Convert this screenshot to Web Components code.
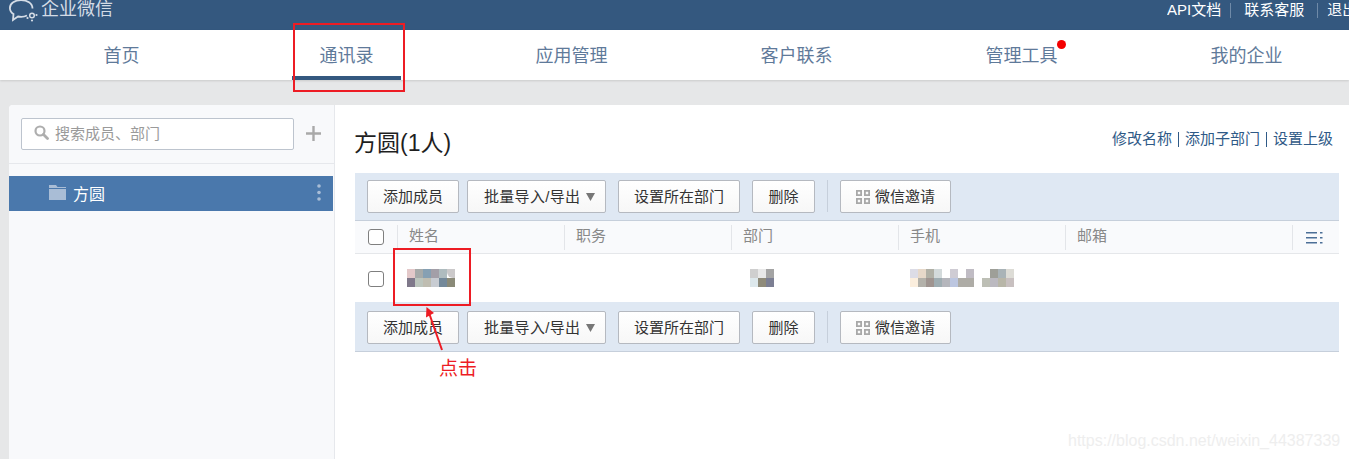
<!DOCTYPE html>
<html lang="zh">
<head>
<meta charset="utf-8">
<title>通讯录</title>
<style>
    html, body { margin: 0; height: 100%; overflow: hidden; }
    body {
        background: #e6e7e8;
        font-family: "Liberation Sans", "Noto Sans CJK SC", sans-serif;
        position: relative;
        width: 1349px;
        height: 459px;
    }
</style>
</head>
<body>
<wx-topbar></wx-topbar>
<wx-nav></wx-nav>
<wx-page>
    <wx-sidebar slot="side"></wx-sidebar>
    <wx-party></wx-party>
</wx-page>
<wx-annotations></wx-annotations>

<script>
    class WxTopbar extends HTMLElement {
        constructor() {
            super();
            this.attachShadow({ mode: 'open' });
            this.shadowRoot.innerHTML = `
                <style>
                    :host {
                        display: flex;
                        align-items: flex-start;
                        justify-content: space-between;
                        height: 30px;
                        background: #34587f;
                        color: #fff;
                        font-size: 15px;
                        line-height: 19px;
                        overflow: hidden;
                    }
                    .logo { display: flex; align-items: flex-start; gap: 3px; padding-left: 9px; color: #d4dce6; font-size: 18px; }
                    .logo svg { display: block; }
                    .links { display: flex; align-items: flex-start; white-space: nowrap; width: 182px; overflow: hidden; }
                    .sep { width: 1px; height: 15px; background: #6f8aa8; margin-top: 3px; flex: none; }
                    .a { margin: 3px 13px 0 9px; }
                    .b { margin: 3px 9px 0 13px; }
                </style>
                <div class="logo">
                    <svg width="29" height="23" viewBox="0 0 29 23" fill="none" stroke="#d4dce6" stroke-width="1.800">
                        <path d="M18 15.500 C15.500 16.800 12.500 17.200 9 16.500 L4 20 L4.500 14 C2 12.500 .9 10 .9 8 C.9 3 6 .2 12 .2 C18 .2 23.500 3 23.500 8.500"/>
                        <circle cx="23" cy="15.500" r="2.300" stroke-width="1.500"/>
                        <circle cx="18.500" cy="18" r="1.100" fill="#d4dce6" stroke="none"/>
                        <circle cx="23" cy="20.500" r="1.100" fill="#d4dce6" stroke="none"/>
                        <circle cx="27.500" cy="15" r="1.100" fill="#d4dce6" stroke="none"/>
                    </svg>
                    <span>企业微信</span>
                </div>
                <div class="links">
                    <span>API文档</span><i class="sep a"></i><span>联系客服</span><i class="sep b"></i><span>退出</span>
                </div>
            `;
        }
    }

    class WxNav extends HTMLElement {
        constructor() {
            super();
            this.attachShadow({ mode: 'open' });
            const items = ['首页', '通讯录', '应用管理', '客户联系', '管理工具', '我的企业'];
            this.shadowRoot.innerHTML = `
                <style>
                    :host {
                        display: grid;
                        grid-template-columns: repeat(6, 225px);
                        height: 50px;
                        background: #fff;
                        box-shadow: 0 1px 2px rgba(0,0,0,.12);
                        position: relative;
                        padding-left: 9px;
                        box-sizing: border-box;
                    }
                    a {
                        display: flex;
                        align-items: center;
                        justify-content: center;
                        height: 50px;
                        box-sizing: border-box;
                        padding-bottom: 2px;
                        font-size: 18px;
                        color: #5f7a9a;
                        position: relative;
                    }
                    a.on::after {
                        content: '';
                        position: absolute;
                        left: 58px;
                        width: 109px;
                        bottom: 0;
                        height: 4px;
                        background: #34587f;
                    }
                    b { position: absolute; left: 148px; top: 10px; width: 9px; height: 9px; border-radius: 50%; background: #f40000; }
                </style>
                ${items.map((t, i) => `<a class="${i === 1 ? 'on' : ''}">${t}${i === 4 ? '<b></b>' : ''}</a>`).join('')}
            `;
        }
    }

    class WxPage extends HTMLElement {
        constructor() {
            super();
            this.attachShadow({ mode: 'open' });
            this.shadowRoot.innerHTML = `
                <style>
                    :host {
                        display: flex;
                        margin: 25px 0 0 9px;
                        height: 354px;
                        background: #fff;
                        border-radius: 4px 0 0 0;
                        overflow: hidden;
                    }
                </style>
                <slot name="side"></slot>
                <slot></slot>
            `;
        }
    }

    class WxSidebar extends HTMLElement {
        constructor() {
            super();
            this.attachShadow({ mode: 'open' });
            this.shadowRoot.innerHTML = `
                <style>
                    :host {
                        display: block;
                        width: 326px;
                        flex: none;
                        box-sizing: border-box;
                        background: #f8f9fb;
                        border-right: 1px solid #e6e8ec;
                    }
                    .search {
                        display: flex;
                        align-items: flex-start;
                        height: 59px;
                        box-sizing: border-box;
                        padding: 13px 0 0 12px;
                        border-bottom: 1px solid #e6e8ec;
                    }
                    .box {
                        display: flex;
                        align-items: center;
                        gap: 6px;
                        width: 273px;
                        height: 32px;
                        box-sizing: border-box;
                        padding: 0 0 3px 12px;
                        background: #fff;
                        border: 1px solid #bdc4ce;
                        border-radius: 2px;
                        color: #9a9a9a;
                        font-size: 15px;
                    }
                    .box svg { flex: none; }
                    .plus { margin: 8px 0 0 12px; display: block; }
                    .row {
                        display: flex;
                        align-items: center;
                        height: 35px;
                        margin: 12px 1px 0 0;
                        padding-left: 40px;
                        background: #4a78ac;
                        color: #fff;
                        font-size: 16px;
                    }
                    .row span { flex: 1; margin-left: 7px; padding-bottom: 1px; }
                    .row svg { display: block; margin-bottom: 2px; }
                    .dots { margin-right: 12px; }
                </style>
                <div class="search">
                    <div class="box">
                        <svg width="15" height="15" viewBox="0 0 15 15" fill="none">
                            <circle cx="6" cy="6" r="4.500" stroke="#aeaeae" stroke-width="2.200"/>
                            <path d="M9.500 9.500 L13.500 13.500" stroke="#aeaeae" stroke-width="2.800" stroke-linecap="round"/>
                        </svg>
                        <span>搜索成员、部门</span>
                    </div>
                    <svg class="plus" width="15" height="15" viewBox="0 0 15 15">
                        <path d="M6.300 0h2.400v15H6.300zM0 6.300h15v2.400H0z" fill="#a9a9a9"/>
                    </svg>
                </div>
                <div class="row">
                    <svg width="17" height="15" viewBox="0 0 17 15" fill="#a9bdd6">
                        <path d="M0 0h7l1.500 2H17v1H0zM0 4h17v11H0z"/>
                    </svg>
                    <span>方圆</span>
                    <svg class="dots" width="4" height="17" viewBox="0 0 4 17" fill="#a9bdd6">
                        <circle cx="2" cy="2" r="1.800"/><circle cx="2" cy="8.500" r="1.800"/><circle cx="2" cy="15" r="1.800"/>
                    </svg>
                </div>
            `;
        }
    }

    class WxButton extends HTMLElement {
        constructor() {
            super();
            this.attachShadow({ mode: 'open' });
            this.shadowRoot.innerHTML = `
                <style>
                    :host {
                        display: inline-flex;
                        align-items: center;
                        justify-content: center;
                        gap: 5px;
                        height: 33px;
                        box-sizing: border-box;
                        padding-bottom: 2px;
                        border: 1px solid #b5b9c0;
                        border-radius: 2px;
                        background: linear-gradient(#fff, #f7f7f7);
                        color: #333;
                        font-size: 15px;
                        white-space: nowrap;
                    }
                </style>
                <slot></slot>
            `;
        }
    }

    class WxToolbar extends HTMLElement {
        constructor() {
            super();
            this.attachShadow({ mode: 'open' });
            const h = this.getAttribute('h');
            const pad = this.getAttribute('pad');
            this.shadowRoot.innerHTML = `
                <style>
                    :host {
                        display: flex;
                        align-items: flex-start;
                        height: ${h}px;
                        box-sizing: border-box;
                        padding: ${pad}px 0 0 12px;
                        background: #dfe8f3;
                        border-bottom: 1px solid #c6cfdb;
                    }
                    wx-button { flex: none; }
                    .div { width: 1px; height: 32px; background: #c6cfdb; margin: 0 12px; }
                    svg { display: block; }
                    .batch { justify-content: flex-start; padding-left: 16px; letter-spacing: .3px; gap: 6px; }
                    .batch svg { margin-top: 2px; }
                </style>
                <wx-button style="width:92px">添加成员</wx-button>
                <wx-button class="batch" style="width:139px;margin-left:8px">批量导入/导出<svg width="9" height="9" viewBox="0 0 9 9" fill="#777"><path d="M0 1h9L4.500 9z"/></svg></wx-button>
                <wx-button style="width:122px;margin-left:12px">设置所在部门</wx-button>
                <wx-button style="width:63px;margin-left:12px">删除</wx-button>
                <i class="div"></i>
                <wx-button style="width:111px">
                    <svg width="14" height="14" viewBox="0 0 14 14" fill="#a8a8a8" style="margin-top:2px">
                        <path d="M0 0h6v6H0zM1.800 1.800v2.400h2.400V1.800zM8 0h6v6H8zM9.800 1.800v2.400h2.400V1.800zM0 8h6v6H0zM1.800 9.800v2.400h2.400V9.800zM8 8h6v6H8zM9.800 9.800v2.400h2.400V9.800z" fill-rule="evenodd"/>
                    </svg>
                    微信邀请
                </wx-button>
            `;
        }
    }

    class WxCheckbox extends HTMLElement {
        constructor() {
            super();
            this.attachShadow({ mode: 'open' });
            this.shadowRoot.innerHTML = `
                <style>
                    :host {
                        display: block;
                        width: 16px;
                        height: 16px;
                        box-sizing: border-box;
                        background: #fff;
                        border: 1px solid #7f7f7f;
                        border-radius: 3px;
                    }
                </style>
            `;
        }
    }

    // stands in for the pixelated name / phone in the screenshot
    class WxMosaic extends HTMLElement {
        constructor() {
            super();
            this.attachShadow({ mode: 'open' });
            const colors = this.getAttribute('colors').split(' ');
            const cols = this.getAttribute('cols');
            this.shadowRoot.innerHTML = `
                <style>
                    :host {
                        display: inline-grid;
                        grid-template-columns: repeat(${cols}, 8px);
                        grid-auto-rows: 9px;
                        vertical-align: top;
                    }
                    :host([round]) i:first-child { border-top-left-radius: 6px; }
                    :host([round]) i:nth-child(${Number(cols) + 1}) { border-bottom-left-radius: 6px; }
                </style>
                ${colors.map(c => `<i style="background:${c === '-' ? 'transparent' : '#' + c}"></i>`).join('')}
            `;
        }
    }

    class WxParty extends HTMLElement {
        constructor() {
            super();
            this.attachShadow({ mode: 'open' });
            this.shadowRoot.innerHTML = `
                <style>
                    :host {
                        display: block;
                        flex: 1;
                        min-width: 0;
                        padding: 0 10px 0 20px;
                        background: #fff;
                    }
                    .head {
                        display: flex;
                        justify-content: space-between;
                        align-items: flex-start;
                        height: 68px;
                        box-sizing: border-box;
                        padding-top: 25px;
                    }
                    h1 { margin: 0 0 0 -1px; font-weight: normal; font-size: 23px; line-height: 26px; color: #1f1f1f; }
                    .acts { display: flex; align-items: center; font-size: 15px; line-height: 18px; color: #2f5a87; margin: 0 6px 0 0; }
                    .acts i { width: 1px; height: 15px; background: #2f5a87; margin: 0 6px; }
                    .thead, .tbody {
                        display: grid;
                        grid-template-columns: 42px repeat(4, 167px) 227px 47px;
                        align-items: center;
                    }
                    .thead {
                        height: 32px;
                        background: #f9fafc;
                        border-bottom: 1px solid #e5e7ea;
                        color: #888;
                        font-size: 15px;
                    }
                    .thead > div { height: 25px; line-height: 22px; padding-left: 11px; box-sizing: border-box; border-left: 1px solid #e3e5e9; }
                    .thead > .c0, .tbody > .c0 { height: auto; border: 0; padding: 0 0 0 13px; display: flex; align-items: center; }
                    .thead > .menu { padding: 7px 0 0 13px; }
                    .tbody { height: 48px; color: #333; font-size: 14px; }
                    .tbody > div { display: flex; }
                    .tbody > .c0 { padding-top: 2px; }
                </style>
                <div class="head">
                    <h1>方圆(1人)</h1>
                    <div class="acts"><span>修改名称</span><i></i><span>添加子部门</span><i></i><span>设置上级</span></div>
                </div>
                <wx-toolbar h="48" pad="7"></wx-toolbar>
                <div class="thead">
                    <div class="c0"><wx-checkbox></wx-checkbox></div>
                    <div>姓名</div><div>职务</div><div>部门</div><div>手机</div><div>邮箱</div>
                    <div class="menu">
                        <svg width="17" height="12" viewBox="0 0 17 12" fill="#4c6f97" style="display:block">
                            <path d="M0 0h11v1.500H0zM0 5h11v1.500H0zM0 10h11v1.500H0zM14 0h2.500v1.500H14zM14 5h2.500v1.500H14zM14 10h2.500v1.500H14z"/>
                        </svg>
                    </div>
                </div>
                <div class="tbody">
                    <div class="c0"><wx-checkbox></wx-checkbox></div>
                    <div style="padding-left:10px"><wx-mosaic round cols="6" colors="e3c8c9 a6aaa9 86a0b3 a39fa8 afbcbf cbc9ca 7f788a bcc5bd bfbdb1 c8ccd2 74899a 8a8a78"></wx-mosaic></div>
                    <div></div>
                    <div style="padding-left:19px"><wx-mosaic cols="3" colors="cfcfcf e8e8e8 a4a4a4 dde8ec 8f8b7a 7c7f93"></wx-mosaic></div>
                    <div style="padding-left:12px"><wx-mosaic cols="13" colors="dcdce6 e6d8c9 b0b0a6 d3dadb - cfccd4 - c0bcc4 - - 9e9f98 a9b3b7 dddcd6 fbeedd b3b1aa 9f9490 9fadb2 b5b6bc bcc6e0 aeaca6 aeaca6 - bdbfb5 bbb9c0 b8b6a8 c8c0c0"></wx-mosaic></div>
                </div>
                <wx-toolbar h="50" pad="9"></wx-toolbar>
            `;
        }
    }

    // the red marks drawn on top of the screenshot, and the blog watermark
    class WxAnnotations extends HTMLElement {
        constructor() {
            super();
            this.attachShadow({ mode: 'open' });
            this.shadowRoot.innerHTML = `
                <style>
                    :host { display: block; position: absolute; left: 0; top: 0; width: 1349px; height: 459px; pointer-events: none; }
                    .box { position: absolute; box-sizing: border-box; border: 2px solid #ed1c24; }
                    .word { position: absolute; left: 439px; top: 357px; font-size: 19px; line-height: 23px; color: #ed1c24; }
                    .mark { position: absolute; left: 1068px; top: 431px; font-size: 16px; line-height: 20px; color: #eeeeee; }
                    svg { position: absolute; left: 420px; top: 300px; }
                </style>
                <div class="box" style="left:293px;top:23px;width:112px;height:69px"></div>
                <div class="box" style="left:393px;top:248px;width:78px;height:58px"></div>
                <svg width="30" height="60" viewBox="0 0 30 60">
                    <path d="M8 10 L22 50" stroke="#ed1c24" stroke-width="2"/>
                    <path d="M6.500 7 L6 17.500 L14 13 z" fill="#ed1c24"/>
                </svg>
                <div class="word">点击</div>
                <div class="mark">https://blog.csdn.net/weixin_44387339</div>
            `;
        }
    }

    customElements.define('wx-topbar', WxTopbar);
    customElements.define('wx-nav', WxNav);
    customElements.define('wx-page', WxPage);
    customElements.define('wx-sidebar', WxSidebar);
    customElements.define('wx-button', WxButton);
    customElements.define('wx-toolbar', WxToolbar);
    customElements.define('wx-checkbox', WxCheckbox);
    customElements.define('wx-mosaic', WxMosaic);
    customElements.define('wx-party', WxParty);
    customElements.define('wx-annotations', WxAnnotations);
</script>
</body>
</html>
